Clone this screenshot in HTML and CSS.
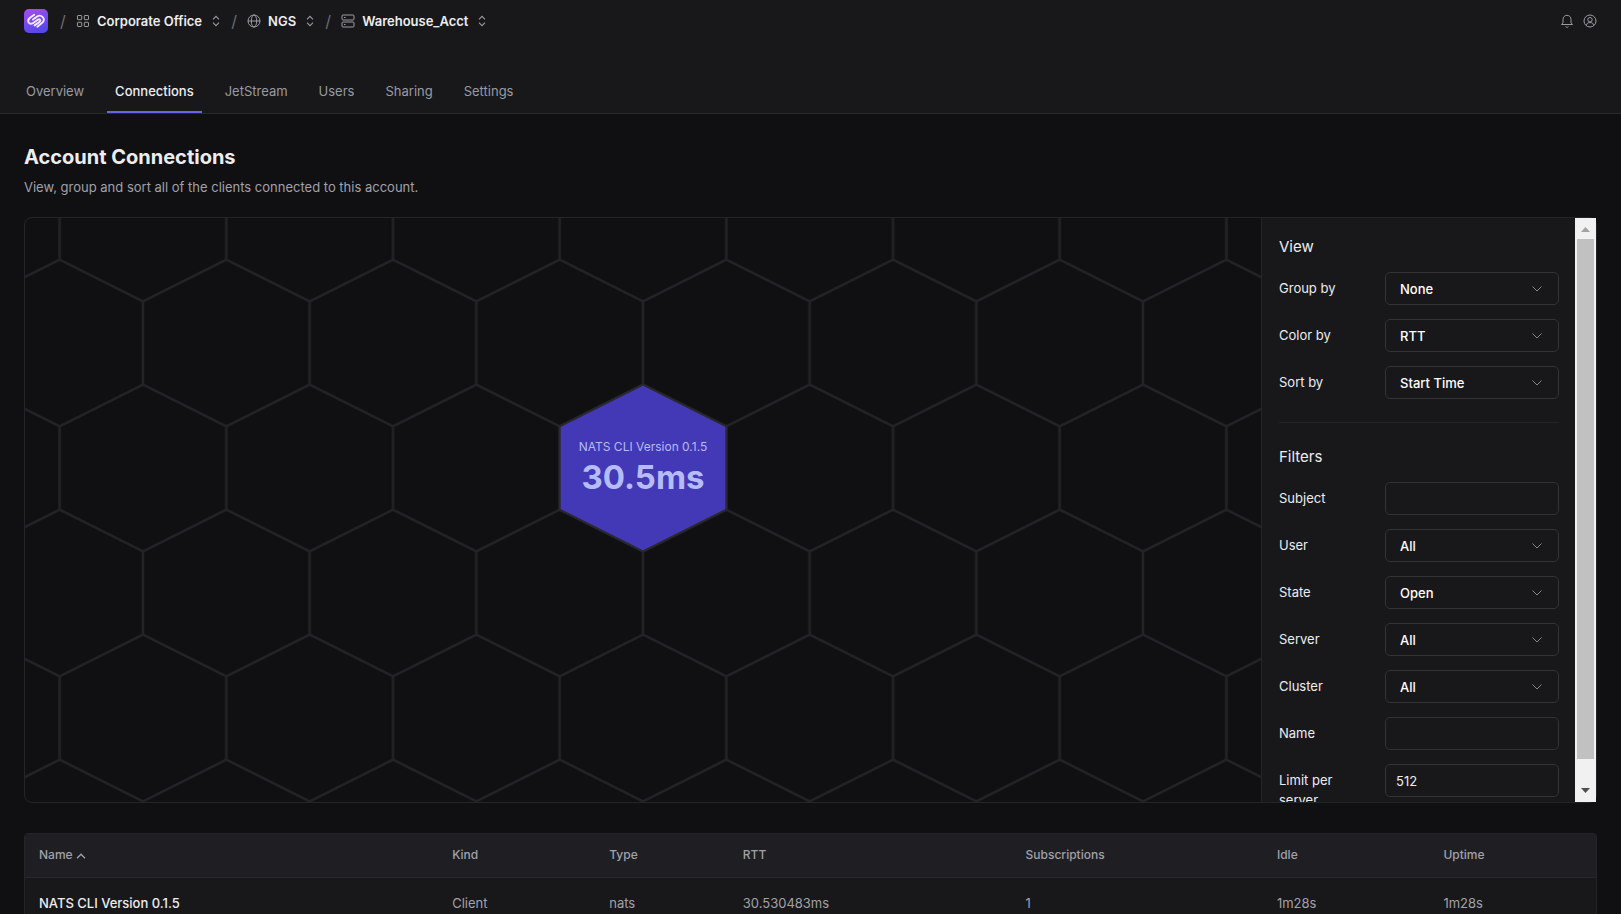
FILE: index.html
```html
<!DOCTYPE html>
<html lang="en">
<head>
<meta charset="utf-8">
<title>Account Connections</title>
<link rel="stylesheet" href="styles.css">
</head>
<body>
<svg class="defs" aria-hidden="true">
  <symbol id="updown" viewBox="0 0 10 14"><path d="M1.500 5 5 1.500 8.500 5M1.500 9 5 12.500 8.500 9"/></symbol>
  <symbol id="down" viewBox="0 0 12 8"><path d="M1.500 1.500 6 6 10.500 1.500"/></symbol>
</svg>
<header class="top">
  <div class="bar">
    <a class="logo" href="#" aria-label="Home">
      <svg viewBox="0 0 24 24" width="24" height="24">
        <defs><linearGradient id="lg" x1="0" y1="0" x2="0.4" y2="1"><stop offset="0" stop-color="#a94df0"/><stop offset="1" stop-color="#5648ea"/></linearGradient></defs>
        <rect width="24" height="24" rx="5" fill="url(#lg)"/>
        <g fill="none" stroke="#f1eaff" stroke-width="1.900" stroke-linecap="round" stroke-linejoin="round">
          <path d="M10.200 5.800 6 8.800C2.300 11.600 5 16.400 9 14.200L14 10.600C15.800 9.500 17.200 11.700 15.600 12.900L10.600 16.400"/>
          <path d="M9 10.600 13.200 7.500C17.300 4.800 22 10 18.500 13.600L13.400 17.800"/>
        </g>
      </svg>
    </a>
    <nav class="crumbs" aria-label="Breadcrumb">
      <span class="slash">/</span>
      <button class="crumb" type="button">
        <svg class="ico" viewBox="0 0 14 14"><rect x="1.500" y="1.500" width="4.200" height="4.200" rx=".6"/><rect x="8.300" y="1.500" width="4.200" height="4.200" rx=".6"/><rect x="1.500" y="8.300" width="4.200" height="4.200" rx=".6"/><rect x="8.300" y="8.300" width="4.200" height="4.200" rx=".6"/></svg>
        <span>Corporate Office</span><svg class="sort"><use href="#updown"/></svg>
      </button>
      <span class="slash">/</span>
      <button class="crumb" type="button">
        <svg class="ico" viewBox="0 0 14 14"><circle cx="7" cy="7" r="6"/><ellipse cx="7" cy="7" rx="2.700" ry="6"/><path d="M1 7h12"/></svg>
        <span>NGS</span><svg class="sort"><use href="#updown"/></svg>
      </button>
      <span class="slash">/</span>
      <button class="crumb" type="button">
        <svg class="ico" viewBox="0 0 14 14"><rect x="1" y="1" width="12" height="5" rx="1"/><rect x="1" y="8" width="12" height="5" rx="1"/><path d="M3 3.500h1.500M3 10.500h1.500"/></svg>
        <span>Warehouse_Acct</span><svg class="sort"><use href="#updown"/></svg>
      </button>
    </nav>
    <div class="actions">
      <button type="button" aria-label="Notifications"><svg class="ico" viewBox="0 0 14 14"><path d="M1.500 10.500h11L11 8.800V5.500C11 3 9.300 1.300 7 1.300S3 3 3 5.500v3.300zM5.500 12.600c.8.900 2.200.9 3 0"/></svg></button>
      <button type="button" aria-label="Profile"><svg class="ico" viewBox="0 0 14 14"><circle cx="7" cy="7" r="6"/><circle cx="7" cy="5.700" r="2.200"/><path d="M3.500 11.500C3.500 9.200 5 8.600 7 8.600S10.500 9.200 10.500 11.500"/></svg></button>
    </div>
  </div>
  <nav class="tabs" aria-label="Account">
    <a class="tab" href="#">Overview</a>
    <a class="tab active" href="#" aria-current="page">Connections</a>
    <a class="tab" href="#">JetStream</a>
    <a class="tab" href="#">Users</a>
    <a class="tab" href="#">Sharing</a>
    <a class="tab" href="#">Settings</a>
  </nav>
</header>
<main class="page">
  <h1>Account Connections</h1>
  <p class="lead">View, group and sort all of the clients connected to this account.</p>
  <section class="panel">
    <div class="map">
      <svg class="hexes" width="100%" height="100%">
        <defs>
          <pattern id="honeycomb" width="166.670" height="250" patternUnits="userSpaceOnUse" viewBox="0 0 200 300">
            <path d="M100 0V50M0 100 100 50 200 100M0 100V200M200 100V200M0 200 100 250 200 200M100 250V300" fill="none" stroke="#232327" stroke-width="3"/>
          </pattern>
        </defs>
        <svg x="50%" y="50%" overflow="visible">
          <g transform="translate(0 -42)">
            <rect x="-3000" y="-2000" width="6000" height="4000" fill="url(#honeycomb)"/>
            <path d="M0-83.300 83.300-41.700V41.700L0 83.300-83.300 41.700V-41.700Z" fill="#4338b5" stroke="#29282f" stroke-width="2"/>
            <text class="hex-name" y="-17">NATS CLI Version 0.1.5</text>
            <text class="hex-value" y="21">30.5ms</text>
          </g>
        </svg>
      </svg>
    </div>
    <aside class="side">
      <form class="options">
        <h2>View</h2>
        <div class="fields">
          <div class="field"><label for="group">Group by</label><div class="pick"><select id="group"><option>None</option></select><svg><use href="#down"/></svg></div></div>
          <div class="field"><label for="color">Color by</label><div class="pick"><select id="color"><option>RTT</option></select><svg><use href="#down"/></svg></div></div>
          <div class="field"><label for="sort">Sort by</label><div class="pick"><select id="sort"><option>Start Time</option></select><svg><use href="#down"/></svg></div></div>
        </div>
        <hr>
        <h2>Filters</h2>
        <div class="fields">
          <div class="field"><label for="subject">Subject</label><input id="subject" type="text"></div>
          <div class="field"><label for="user">User</label><div class="pick"><select id="user"><option>All</option></select><svg><use href="#down"/></svg></div></div>
          <div class="field"><label for="state">State</label><div class="pick"><select id="state"><option>Open</option></select><svg><use href="#down"/></svg></div></div>
          <div class="field"><label for="server">Server</label><div class="pick"><select id="server"><option>All</option></select><svg><use href="#down"/></svg></div></div>
          <div class="field"><label for="cluster">Cluster</label><div class="pick"><select id="cluster"><option>All</option></select><svg><use href="#down"/></svg></div></div>
          <div class="field"><label for="name">Name</label><input id="name" type="text"></div>
          <div class="field"><label for="limit">Limit per server</label><input id="limit" type="text" value="512"></div>
        </div>
      </form>
      <div class="scrollbar" aria-hidden="true">
        <svg viewBox="0 0 21 21"><path d="M6 14h9L10.500 9z" fill="#a3a3a3"/></svg>
        <div class="track"><div class="thumb"></div></div>
        <svg viewBox="0 0 21 21"><path d="M6 7h9L10.500 12z" fill="#505050"/></svg>
      </div>
    </aside>
  </section>
  <div class="list">
    <table>
      <colgroup><col class="c-name"><col class="c-kind"><col class="c-type"><col class="c-rtt"><col class="c-subs"><col class="c-idle"><col></colgroup>
      <thead>
        <tr><th aria-sort="ascending">Name <svg class="asc" viewBox="0 0 10 6"><path d="M1 5.200 5 1.200 9 5.200"/></svg></th><th>Kind</th><th>Type</th><th>RTT</th><th>Subscriptions</th><th>Idle</th><th>Uptime</th></tr>
      </thead>
      <tbody>
        <tr><td class="strong">NATS CLI Version 0.1.5</td><td>Client</td><td>nats</td><td>30.530483ms</td><td>1</td><td>1m28s</td><td>1m28s</td></tr>
      </tbody>
    </table>
  </div>
</main>
</body>
</html>
```
FILE: styles.css
```css
* { box-sizing: border-box; }
body {
  margin: 0;
  height: 100vh;
  overflow: hidden;
  background: #101012;
  color: #ededf0;
  font: 13px/20px Inter, "Liberation Sans", sans-serif;
}
button, input, select { font: inherit; color: inherit; }
button { background: none; border: 0; padding: 0; cursor: pointer; }
.defs { display: none; }
symbol { fill: none; }

.top { background: #18181b; border-bottom: 1px solid #29292d; }
.bar { display: flex; align-items: center; height: 42px; padding: 0 24px; }
.logo { display: flex; }
.crumbs { display: flex; align-items: center; padding-left: 11px; gap: 9px; }
.slash { width: 8px; text-align: center; color: #6b6b72; font-size: 16px; }
.crumb { display: flex; align-items: center; font-weight: 600; }
.crumb span { margin: 0 9px 0 7px; }
.ico { display: block; width: 14px; height: 14px; fill: none; stroke: #9b9ba3; }
.sort { width: 10px; height: 12px; fill: none; stroke: #9b9ba3; stroke-width: 1.2; }
.actions { display: flex; gap: 9px; margin-left: auto; }
.tabs { display: flex; gap: 15px; margin-top: 28px; padding: 0 18px; }
.tab {
  height: 43px;
  padding: 11px 8px 0;
  color: #9a9aa2;
  text-decoration: none;
  border-bottom: 2px solid transparent;
}
.tab.active { color: #ededf0; font-weight: 500; border-color: #6366e8; }

.page { padding: 29px 24px 0; }
h1 { margin: 0; font-size: 20px; line-height: 28px; font-weight: 700; }
.lead { margin: 6px 0 20px; color: #a1a1a9; }

.panel {
  display: flex;
  height: calc(100vh - 328px);
  border: 1px solid #252529;
  border-radius: 8px;
}
.map { flex: 1; min-width: 0; overflow: hidden; border-radius: 8px 0 0 8px; }
.hexes { display: block; }
.hexes text { text-anchor: middle; fill: #b4bcfc; }
.hex-name { font-size: 12px; }
.hex-value { font-size: 33px; font-weight: 700; }

.side { display: flex; width: 335px; border-left: 1px solid #252529; background: #18181b; overflow: hidden; }
.options { flex: 1; padding: 19px 16px 19px 17px; }
h2 { margin: 0 0 15px; font-size: 15px; line-height: 20px; font-weight: 400; }
.fields { display: grid; gap: 14px; }
.field { display: grid; grid-template-columns: 90px 1fr; column-gap: 16px; height: 33px; }
.field label { padding-top: 6px; }
.field input, .field select {
  width: 100%;
  height: 33px;
  padding: 0 10px;
  background: #18181b;
  border: 1px solid #323237;
  border-radius: 5px;
  outline: 0;
}
.field select { appearance: none; padding: 0 14px; font-weight: 500; color: #fff; }
.pick { display: grid; align-items: center; }
.pick > * { grid-area: 1 / 1; }
.pick svg { justify-self: end; width: 12px; height: 8px; margin-right: 16px; stroke: #85858d; pointer-events: none; }
hr { margin: 23px 0 24px; border: 0; border-top: 1px solid #252529; }

.scrollbar { display: flex; flex-direction: column; width: 21px; background: #f1f1f1; }
.scrollbar svg { display: block; height: 21px; }
.track { flex: 1; padding: 0 2px; }
.thumb { height: 96%; background: #c1c1c1; }

.list { margin-top: 30px; border: 1px solid #252529; border-radius: 4px; overflow: hidden; background: #18181b; }
table { width: 100%; table-layout: fixed; border-collapse: collapse; }
th, td { padding: 0 14px; text-align: left; }
th { height: 43px; background: #1f1f23; border-bottom: 1px solid #28282c; font-size: 12px; font-weight: 500; color: #a1a1a9; }
td { height: 52px; color: #a1a1a9; }
.strong { color: #ededf0; font-weight: 500; }
.asc { width: 10px; height: 6px; fill: none; stroke: #a1a1a9; stroke-width: 1.3; }
.c-name { width: 26.3%; }
.c-kind { width: 10%; }
.c-type { width: 8.5%; }
.c-rtt { width: 18%; }
.c-subs { width: 16%; }
.c-idle { width: 10.6%; }
```
